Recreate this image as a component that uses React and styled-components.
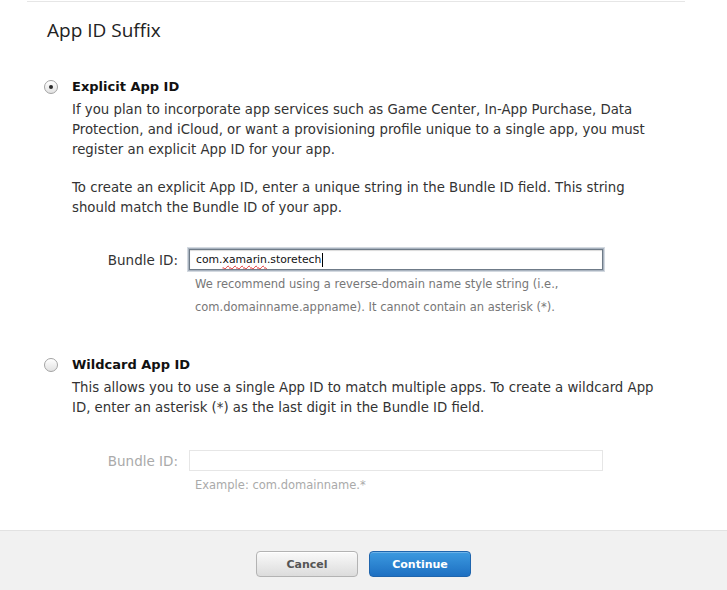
import { createGlobalStyle } from "styled-components";
import styled from "styled-components";

const GlobalStyle = createGlobalStyle`
  html, body {
    margin: 0;
    padding: 0;
    background: #ffffff;
  }
  body {
    font-family: "DejaVu Sans", "Noto Sans", sans-serif;
    color: #333333;
  }
`;

const Page = styled.div`
  width: 727px;
  height: 590px;
  display: flex;
  flex-direction: column;
  overflow: hidden;
`;

const Main = styled.main`
  flex: 1;
  padding: 1px 42px 0 27px;
`;

const Panel = styled.section`
  border-top: 1px solid #e6e6e6;
`;

const Heading = styled.h2`
  margin: 0;
  padding: 16px 0 0 20px;
  font-family: "Open Sans", "Liberation Sans", sans-serif;
  font-weight: 400;
  font-size: 19px;
  line-height: 24px;
  color: #222222;
`;

const Option = styled.div`
  display: grid;
  grid-template-columns: 28px 1fr;
  padding-left: 17px;
  margin-top: ${(p) => p.$top}px;
`;

const Radio = styled.span`
  width: 12px;
  height: 12px;
  margin-top: 3px;
  border-radius: 50%;
  border: 1px solid #a3a3a3;
  background: linear-gradient(#ffffff, #e2e2e2);
  box-shadow: inset 0 1px 1px rgba(255, 255, 255, 0.8);
  display: flex;
  align-items: center;
  justify-content: center;

  &::after {
    content: "";
    width: 4px;
    height: 4px;
    border-radius: 50%;
    background: ${(p) => (p.$checked ? "#2b2b2b" : "transparent")};
  }
`;

const Title = styled.div`
  font-weight: 700;
  font-size: 13px;
  line-height: 20px;
  color: #111111;
`;

const Body = styled.div`
  grid-column: 2;
  margin-top: 3px;
`;

const Para = styled.p`
  margin: 0 0 ${(p) => p.$after || 0}px;
  font-size: 13.3px;
  line-height: 20px;
  color: #333333;
  white-space: nowrap;
`;

const FieldRow = styled.div`
  display: grid;
  grid-template-columns: 151px 414px;
  column-gap: 11px;
  align-items: center;
  margin-top: ${(p) => p.$top}px;
`;

const Label = styled.label`
  text-align: right;
  font-size: 13.5px;
  color: ${(p) => (p.$disabled ? "#aaaaaa" : "#333333")};
`;

const Input = styled.div`
  height: 21px;
  box-sizing: border-box;
  border: ${(p) => (p.$disabled ? "1px solid #e6e6e6" : "1px solid #6f7b88")};
  box-shadow: ${(p) =>
    p.$disabled
      ? "none"
      : "0 0 0 1px #a9b3bf, 0 0 0 2px #d3d9e0, inset 0 1px 1px rgba(0,0,0,0.15)"};
  background: #ffffff;
  padding: 0 6px;
  display: flex;
  align-items: center;
  font-size: 10.8px;
  color: #111111;
`;

const Squiggle = styled.span`
  text-decoration: underline wavy #e03030;
  text-decoration-thickness: 1px;
  text-underline-offset: 2px;
`;

const Caret = styled.span`
  display: inline-block;
  width: 1px;
  height: 14px;
  background: #000000;
  margin-left: 1px;
`;

const Hint = styled.div`
  grid-column: 2;
  padding: 3px 0 0 6px;
  font-size: 11.5px;
  line-height: 23px;
  color: ${(p) => (p.$disabled ? "#aaaaaa" : "#777777")};
`;

const Footer = styled.footer`
  height: 60px;
  background: #f1f1f1;
  border-top: 1px solid #e2e2e2;
  display: flex;
  justify-content: center;
  gap: 11px;
  padding-top: 20px;
  box-sizing: border-box;
`;

const Button = styled.button`
  width: 102px;
  height: 26px;
  border-radius: 4px;
  font-family: "DejaVu Sans", sans-serif;
  font-weight: 700;
  font-size: 11px;
  cursor: pointer;
  border: 1px solid ${(p) => (p.$primary ? "#1f65ad" : "#b3b3b3")};
  color: ${(p) => (p.$primary ? "#ffffff" : "#555555")};
  background: ${(p) =>
    p.$primary
      ? "linear-gradient(#3c9ae0, #1e70c2)"
      : "linear-gradient(#fafafa, #dcdcdc)"};
  box-shadow: ${(p) =>
    p.$primary ? "inset 0 1px 0 rgba(255,255,255,0.25)" : "inset 0 1px 0 #ffffff"};
`;

export default function App() {
  return (
    <Page>
      <GlobalStyle />
      <Main>
        <Panel>
          <Heading>App ID Suffix</Heading>

          <Option $top={35}>
            <Radio $checked />
            <Title>Explicit App ID</Title>
            <Body>
              <Para $after={18}>
                If you plan to incorporate app services such as Game Center, In-App Purchase, Data
                <br />
                Protection, and iCloud, or want a provisioning profile unique to a single app, you must
                <br />
                register an explicit App ID for your app.
              </Para>
              <Para>
                To create an explicit App ID, enter a unique string in the Bundle ID field. This string
                <br />
                should match the Bundle ID of your app.
              </Para>
            </Body>
          </Option>
          <FieldRow $top={31}>
            <Label>Bundle ID:</Label>
            <Input>
              com.<Squiggle>xamarin</Squiggle>.storetech
              <Caret />
            </Input>
            <Hint>
              We recommend using a reverse-domain name style string (i.e.,
              <br />
              com.domainname.appname). It cannot contain an asterisk (*).
            </Hint>
          </FieldRow>

          <Option $top={36}>
            <Radio />
            <Title>Wildcard App ID</Title>
            <Body>
              <Para>
                This allows you to use a single App ID to match multiple apps. To create a wildcard App
                <br />
                ID, enter an asterisk (*) as the last digit in the Bundle ID field.
              </Para>
            </Body>
          </Option>
          <FieldRow $top={32}>
            <Label $disabled>Bundle ID:</Label>
            <Input $disabled />
            <Hint $disabled>Example: com.domainname.*</Hint>
          </FieldRow>
        </Panel>
      </Main>
      <Footer>
        <Button>Cancel</Button>
        <Button $primary>Continue</Button>
      </Footer>
    </Page>
  );
}
